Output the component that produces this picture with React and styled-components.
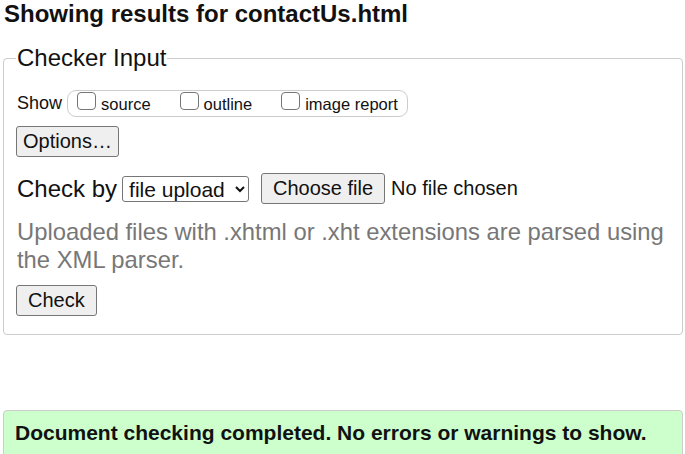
import React from "react";
import styled, { createGlobalStyle } from "styled-components";

const GlobalStyle = createGlobalStyle`
  html, body {
    margin: 0;
    padding: 0;
    background: #fff;
    color: #111;
    font-family: "Liberation Sans", Arial, sans-serif;
  }
`;

export default function App() {
  const [show, setShow] = React.useState({ source: false, outline: false, image: false });
  const [method, setMethod] = React.useState("upload");

  const toggle = (key) => setShow((s) => ({ ...s, [key]: !s[key] }));

  return (
    <Page>
      <GlobalStyle />
      <Title>Showing results for contactUs.html</Title>
      <Fieldset>
        <Legend>Checker Input</Legend>
        <ShowRow>
          <span>Show</span>
          <ShowGroup>
            <CheckLabel $gap={29}>
              <Box type="checkbox" checked={show.source} onChange={() => toggle("source")} />
              source
            </CheckLabel>
            <CheckLabel $gap={29}>
              <Box type="checkbox" checked={show.outline} onChange={() => toggle("outline")} />
              outline
            </CheckLabel>
            <CheckLabel>
              <Box type="checkbox" checked={show.image} onChange={() => toggle("image")} />
              image report
            </CheckLabel>
          </ShowGroup>
        </ShowRow>
        <Button $px={6}>Options…</Button>
        <CheckByRow>
          <span>Check by</span>
          <Select value={method} onChange={(e) => setMethod(e.target.value)}>
            <option value="address">address</option>
            <option value="upload">file upload</option>
            <option value="input">text input</option>
          </Select>
          <FilePick>
            <Button $px={11}>Choose file</Button>
            <span>No file chosen</span>
          </FilePick>
        </CheckByRow>
        <Hint>Uploaded files with .xhtml or .xht extensions are parsed using the XML parser.</Hint>
        <Button $px={11}>Check</Button>
      </Fieldset>
      <Success>Document checking completed. No errors or warnings to show.</Success>
    </Page>
  );
}

const Page = styled.div`
  padding: 0 2px 0 3px;
`;

const Title = styled.h2`
  margin: 0 0 0 1px;
  font-size: 24px;
  line-height: 28px;
  font-weight: 700;
  color: #111;
`;

const Fieldset = styled.fieldset`
  margin: 16px 0 0;
  padding: 18px 10px 18px 12px;
  border: 1px solid #ccc;
  border-radius: 4px;
  display: flex;
  flex-direction: column;
  align-items: flex-start;
`;

const Legend = styled.legend`
  padding: 0 1px;
  font-size: 24px;
  line-height: 28px;
  color: #111;
`;

const ShowRow = styled.div`
  display: flex;
  align-items: center;
  gap: 5px;
  font-size: 18px;
  margin-left: 1px;
  margin-bottom: 9px;
`;

const ShowGroup = styled.div`
  display: flex;
  align-items: center;
  box-sizing: border-box;
  height: 27px;
  padding: 0 9px 0 9px;
  border: 1px solid #ccc;
  border-radius: 9px;
`;

const CheckLabel = styled.label`
  display: flex;
  align-items: center;
  gap: 5px;
  font-size: 16.5px;
  margin-right: ${(p) => p.$gap || 0}px;
  position: relative;
  top: 1px;
`;

const Box = styled.input`
  appearance: none;
  flex: none;
  box-sizing: border-box;
  margin: 0;
  width: 19px;
  height: 18px;
  border: 1.5px solid #767676;
  border-radius: 4px;
  background: #fff;
  position: relative;
  top: -4px;
  &:checked {
    background: #0075ff;
    border-color: #0075ff;
  }
`;

const Button = styled.button`
  font-family: "Liberation Sans", Arial, sans-serif;
  font-size: 20px;
  line-height: 23px;
  box-sizing: border-box;
  height: 31px;
  color: #111;
  padding: 0 ${(p) => p.$px}px;
  background: #efefef;
  border: 1px solid #767676;
  border-radius: 3px;
`;

const CheckByRow = styled.div`
  display: flex;
  align-items: center;
  font-size: 24px;
  margin: 16px 0 0 1px;
  gap: 5px;
`;

const Select = styled.select`
  font-family: "Liberation Sans", Arial, sans-serif;
  font-size: 21px;
  box-sizing: border-box;
  width: 127px;
  height: 26px;
  padding: 0 2px;
  color: #111;
  background: #fff;
  border: 1px solid #767676;
  border-radius: 3px;
`;

const FilePick = styled.div`
  display: flex;
  align-items: center;
  gap: 6px;
  margin-left: 7px;
  font-size: 20px;
`;

const Hint = styled.p`
  margin: 14px 0 11px 1px;
  font-size: 23.8px;
  line-height: 28px;
  color: #777;
`;

const Success = styled.div`
  margin-top: 75px;
  padding: 10px 11px 14px;
  background: #ccffcc;
  border: 1px solid #ccc;
  border-radius: 4px;
  font-size: 21px;
  font-weight: 700;
  color: #111;
`;
